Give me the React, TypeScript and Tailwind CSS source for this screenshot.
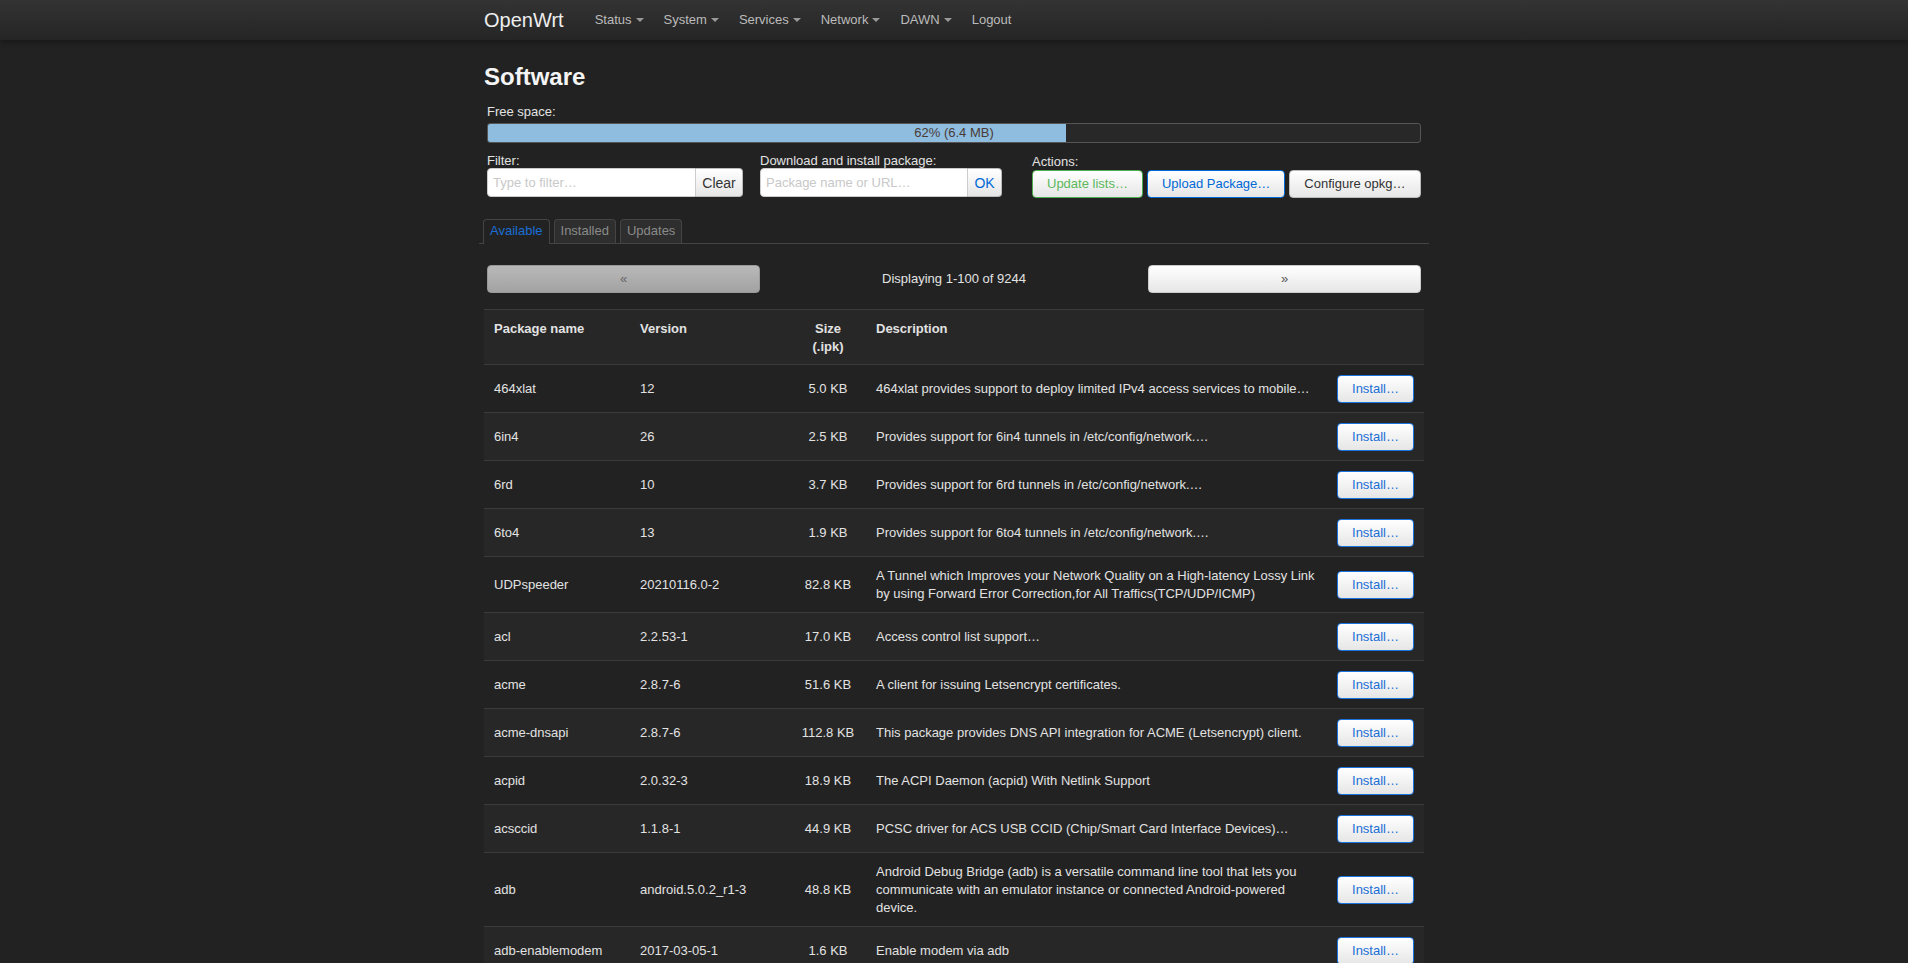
import React from "react";

type Pkg = { name: string; version: string; size: string; desc: string };

const packages: Pkg[] = [
  { name: "464xlat", version: "12", size: "5.0 KB", desc: "464xlat provides support to deploy limited IPv4 access services to mobile…" },
  { name: "6in4", version: "26", size: "2.5 KB", desc: "Provides support for 6in4 tunnels in /etc/config/network.…" },
  { name: "6rd", version: "10", size: "3.7 KB", desc: "Provides support for 6rd tunnels in /etc/config/network.…" },
  { name: "6to4", version: "13", size: "1.9 KB", desc: "Provides support for 6to4 tunnels in /etc/config/network.…" },
  {
    name: "UDPspeeder",
    version: "20210116.0-2",
    size: "82.8 KB",
    desc: "A Tunnel which Improves your Network Quality on a High-latency Lossy Link by using Forward Error Correction,for All Traffics(TCP/UDP/ICMP)",
  },
  { name: "acl", version: "2.2.53-1", size: "17.0 KB", desc: "Access control list support…" },
  { name: "acme", version: "2.8.7-6", size: "51.6 KB", desc: "A client for issuing Letsencrypt certificates." },
  { name: "acme-dnsapi", version: "2.8.7-6", size: "112.8 KB", desc: "This package provides DNS API integration for ACME (Letsencrypt) client." },
  { name: "acpid", version: "2.0.32-3", size: "18.9 KB", desc: "The ACPI Daemon (acpid) With Netlink Support" },
  { name: "acsccid", version: "1.1.8-1", size: "44.9 KB", desc: "PCSC driver for ACS USB CCID (Chip/Smart Card Interface Devices)…" },
  {
    name: "adb",
    version: "android.5.0.2_r1-3",
    size: "48.8 KB",
    desc: "Android Debug Bridge (adb) is a versatile command line tool that lets you communicate with an emulator instance or connected Android-powered device.",
  },
  { name: "adb-enablemodem", version: "2017-03-05-1", size: "1.6 KB", desc: "Enable modem via adb" },
];

const menus = ["Status", "System", "Services", "Network", "DAWN"];

function Caret() {
  return <span className="ml-1 inline-block h-0 w-0 border-x-4 border-t-4 border-x-transparent border-t-[#999]" />;
}

export default function App() {
  return (
    <div className="min-h-screen bg-[#222] font-['Liberation_Sans',Arial,sans-serif] text-[13px] leading-[18px] text-[#e2e2e2]">
      {/* top bar */}
      <div className="h-10 bg-linear-to-b from-[#333] to-[#252525] shadow-[0_2px_6px_rgba(0,0,0,0.35)]">
        <div className="mx-auto flex h-full w-[940px] items-center">
          <span className="mr-[21px] text-[20px] leading-5 text-[#eee]">OpenWrt</span>
          {menus.map((m) => (
            <span key={m} className="flex items-center px-[10px] text-[#bbb]">
              {m}
              <Caret />
            </span>
          ))}
          <span className="px-[10px] text-[#bbb]">Logout</span>
        </div>
      </div>

      <main className="mx-auto w-[940px] pb-10">
        <h2 className="mt-[22px] text-[24px] font-bold leading-[30px] text-[#f5f5f5]">Software</h2>

        <div className="px-[3px]">
          <div className="mt-[12px] leading-4">Free space:</div>
          <div className="relative mt-[3px] h-5 overflow-hidden rounded-[3px] border border-[#555] bg-[#282828]">
            <div className="h-full w-[62%] bg-[#8ebde0]" />
            <span className="absolute inset-0 flex items-center justify-center text-[#4a3b35]">62% (6.4 MB)</span>
          </div>

          <div className="mt-[10px] flex items-start">
            <div className="w-[256px]">
              <div className="leading-[15px]">Filter:</div>
              <div className="flex h-[29px]">
                <input
                  placeholder="Type to filter…"
                  className="h-full w-[209px] rounded-l-[4px] border border-[#ccc] bg-white px-[5px] text-[13px] text-[#333] outline-none placeholder:text-[#c8c8c8]"
                />
                <button className="h-full w-[47px] rounded-r-[4px] border border-l-0 border-[#bbb] bg-linear-to-b from-white to-[#e6e6e6] text-[14px] text-[#333]">
                  Clear
                </button>
              </div>
            </div>

            <div className="ml-[17px] w-[242px]">
              <div className="leading-[15px]">Download and install package:</div>
              <div className="flex h-[29px]">
                <input
                  placeholder="Package name or URL…"
                  className="h-full w-[208px] rounded-l-[4px] border border-[#ccc] bg-white px-[5px] text-[13px] text-[#333] outline-none placeholder:text-[#c8c8c8]"
                />
                <button className="h-full w-[34px] rounded-r-[4px] border border-l-0 border-[#bbb] bg-linear-to-b from-white to-[#e6e6e6] text-[14px] text-[#0069d6]">
                  OK
                </button>
              </div>
            </div>

            <div className="ml-[30px] pt-px">
              <div className="leading-[15px]">Actions:</div>
              <div className="mt-px flex gap-1">
                <button className="h-7 rounded-[4px] border border-[#4cae4c] bg-linear-to-b from-white to-[#e6e6e6] px-[14px] text-[#5cb85c]">
                  Update lists…
                </button>
                <button className="h-7 rounded-[4px] border border-[#0069d6] bg-linear-to-b from-white to-[#e6e6e6] px-[14px] text-[#0069d6]">
                  Upload Package…
                </button>
                <button className="h-7 rounded-[4px] border border-[#bbb] bg-linear-to-b from-white to-[#e6e6e6] px-[14px] text-[#333]">
                  Configure opkg…
                </button>
              </div>
            </div>
          </div>
        </div>

        {/* tabs */}
        <div className="-mx-[5px] mt-[21px] flex gap-1 border-b border-[#444] pl-1">
          <span className="-mb-px rounded-t-[4px] border border-b-0 border-[#444] bg-[#222] px-[6px] pt-[2px] pb-[4px] text-[#1a6fd6]">
            Available
          </span>
          <span className="rounded-t-[4px] border border-b-0 border-[#444] bg-[#2e2e2e] px-[6px] pt-[2px] pb-[3px] text-[#8a8a8a]">
            Installed
          </span>
          <span className="rounded-t-[4px] border border-b-0 border-[#444] bg-[#2e2e2e] px-[6px] pt-[2px] pb-[3px] text-[#8a8a8a]">
            Updates
          </span>
        </div>

        {/* pager */}
        <div className="mt-[21px] grid grid-cols-[273px_1fr_273px] items-center px-[3px]">
          <button className="h-7 rounded-[4px] border border-[#999] bg-linear-to-b from-[#b9b9b9] to-[#a2a2a2] text-[#666]">«</button>
          <span className="text-center">Displaying 1-100 of 9244</span>
          <button className="h-7 rounded-[4px] border border-[#ccc] bg-linear-to-b from-white to-[#e6e6e6] text-[#555]">»</button>
        </div>

        {/* package table */}
        <table className="mt-4 w-full table-fixed border-separate border-spacing-0">
          <colgroup>
            <col className="w-[146px]" />
            <col className="w-[160px]" />
            <col className="w-[76px]" />
            <col className="w-[461px]" />
            <col className="w-[97px]" />
          </colgroup>
          <thead>
            <tr className="bg-[#272727]">
              <th className="border-t border-[#3b3b3b] px-[10px] pt-[10px] pb-[8px] text-left align-top font-bold">Package name</th>
              <th className="border-t border-[#3b3b3b] px-[10px] pt-[10px] pb-[8px] text-left align-top font-bold">Version</th>
              <th className="border-t border-[#3b3b3b] px-[10px] pt-[10px] pb-[8px] text-center align-top font-bold">Size (.ipk)</th>
              <th className="border-t border-[#3b3b3b] px-[10px] pt-[10px] pb-[8px] text-left align-top font-bold">Description</th>
              <th className="border-t border-[#3b3b3b] px-[10px] pt-[10px] pb-[8px]" />
            </tr>
          </thead>
          <tbody>
            {packages.map((p, i) => (
              <tr key={p.name} className={i % 2 === 1 ? "bg-[#272727]" : "bg-[#222]"}>
                <td className="border-t border-[#3b3b3b] px-[10px] pt-[10px] pb-[9px] align-middle">{p.name}</td>
                <td className="border-t border-[#3b3b3b] px-[10px] pt-[10px] pb-[9px] align-middle">{p.version}</td>
                <td className="border-t border-[#3b3b3b] px-[10px] pt-[10px] pb-[9px] text-center align-middle whitespace-nowrap">{p.size}</td>
                <td className="border-t border-[#3b3b3b] px-[10px] pt-[10px] pb-[9px] align-middle">{p.desc}</td>
                <td className="border-t border-[#3b3b3b] px-[10px] pt-[10px] pb-[9px] text-right align-middle">
                  <button className="h-7 rounded-[4px] border border-[#1a73e0] bg-linear-to-b from-white to-[#e6e6e6] px-[14px] text-[#1b6fd6]">
                    Install…
                  </button>
                </td>
              </tr>
            ))}
          </tbody>
        </table>
      </main>
    </div>
  );
}
